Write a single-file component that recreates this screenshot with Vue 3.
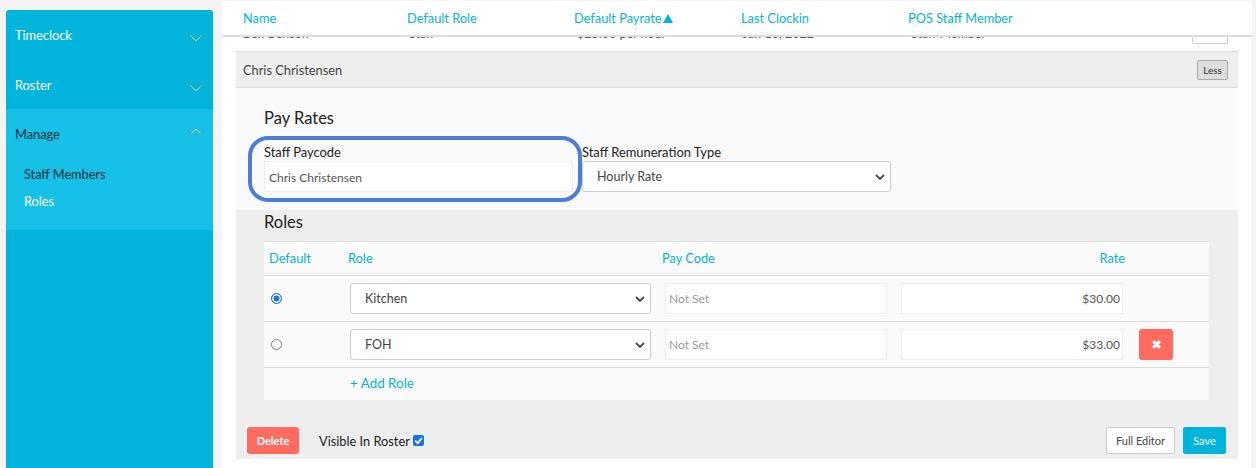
<template>
  <div class="page">
    <aside class="sidebar">
      <div class="nav-item timeclock">
        <span>Timeclock</span>
        <svg class="chev" viewBox="0 0 14 8"><path d="M1 1l6 6 6-6" /></svg>
      </div>
      <div class="nav-item roster">
        <span>Roster</span>
        <svg class="chev" viewBox="0 0 14 8"><path d="M1 1l6 6 6-6" /></svg>
      </div>
      <div class="nav-open">
        <div class="nav-item manage">
          <span>Manage</span>
          <svg class="chev" viewBox="0 0 14 8"><path d="M1 7l6-6 6 6" /></svg>
        </div>
        <div class="sub-link dark">Staff Members</div>
        <div class="sub-link">Roles</div>
      </div>
    </aside>

    <main class="main">
      <div class="table-head">
        <span v-for="col in columns" :key="col.label" :style="{ width: col.width + 'px' }">
          {{ col.label }}<i v-if="col.sorted" class="sort-arrow"></i>
        </span>
      </div>
      <div class="clipped-row">
        <div class="clipped-inner">
          <span class="c-name">Ben Benson</span>
          <span class="c-role">Staff</span>
          <span class="c-pay">$25.00 per hour</span>
          <span class="c-date">Jan 10, 2022</span>
          <span class="c-pos">Staff Member</span>
          <button class="more">More</button>
        </div>
      </div>
      <div class="open-row">
        <span>Chris Christensen</span>
        <button class="less">Less</button>
      </div>

      <section class="pay-rates">
        <h3>Pay Rates</h3>
        <div class="fields">
          <div class="field paycode">
            <label>Staff Paycode</label>
            <div class="input">Chris Christensen</div>
            <div class="ring"></div>
          </div>
          <div class="field remun">
            <label>Staff Remuneration Type</label>
            <div class="select">
              <span>Hourly Rate</span>
              <svg class="caret" viewBox="0 0 10 6"><path d="M1 1l4 4 4-4" /></svg>
            </div>
          </div>
        </div>
      </section>

      <section class="roles">
        <h3>Roles</h3>
        <div class="roles-table">
          <div class="r-head">
            <span class="h-default">Default</span>
            <span class="h-role">Role</span>
            <span class="h-code">Pay Code</span>
            <span class="h-rate">Rate</span>
          </div>
          <div v-for="r in roles" :key="r.name" class="r-row">
            <div class="radio-cell">
              <span :class="['radio', { on: r.isDefault }]"></span>
            </div>
            <div class="select role-select">
              <span>{{ r.name }}</span>
              <svg class="caret" viewBox="0 0 10 6"><path d="M1 1l4 4 4-4" /></svg>
            </div>
            <div class="input code">Not Set</div>
            <div class="input rate">{{ r.rate }}</div>
            <button v-if="!r.isDefault" class="remove">
              <svg viewBox="0 0 10 10"><path d="M2 2l6 6M8 2l-6 6" /></svg>
            </button>
          </div>
          <div class="add-role">+ Add Role</div>
        </div>

        <div class="actions">
          <button class="delete">Delete</button>
          <span class="visible">Visible In Roster</span>
          <span class="check">
            <svg viewBox="0 0 10 10"><path d="M2 5.2l2.2 2.2L8 2.8" /></svg>
          </span>
          <button class="full-editor">Full Editor</button>
          <button class="save">Save</button>
        </div>
      </section>
    </main>
  </div>
</template>

<script setup>
const columns = [
  { label: 'Name', width: 164 },
  { label: 'Default Role', width: 167 },
  { label: 'Default Payrate', width: 167, sorted: true },
  { label: 'Last Clockin', width: 167 },
  { label: 'POS Staff Member', width: 200 },
];

const roles = [
  { name: 'Kitchen', rate: '$30.00', isDefault: true },
  { name: 'FOH', rate: '$33.00', isDefault: false },
];
</script>

<style>
html, body {
  margin: 0;
  background: #f4f4f4;
}
</style>

<style scoped>
.page {
  display: flex;
  width: 1256px;
  height: 468px;
  overflow: hidden;
  font-family: Lato, "Noto Sans", sans-serif;
  font-size: 13px;
  color: #333;
  background: #f4f4f4;
}
.sidebar {
  width: 207px;
  margin: 10px 9px 0 6px;
  background: #00b4dc;
  border-radius: 3px 3px 0 0;
  color: #fff;
  flex: none;
}
.nav-item {
  display: flex;
  justify-content: space-between;
  padding: 0 10px 0 9px;
  font-size: 12.8px;
}
.timeclock {
  height: 50px;
  padding-top: 17px;
  box-sizing: border-box;
}
.roster {
  height: 49px;
  padding-top: 17px;
  box-sizing: border-box;
}
.manage {
  height: 56px;
  padding-top: 17px;
  box-sizing: border-box;
  color: #06303c;
}
.chev {
  width: 14px;
  height: 8px;
  margin-top: 7px;
  fill: none;
  stroke: #fff;
  stroke-width: 1;
}
.manage .chev {
  margin-top: 2px;
}
.nav-open {
  background: #17c0e6;
  height: 121px;
}
.sub-link {
  padding-left: 18px;
  margin-bottom: 9px;
  line-height: 18px;
  font-size: 12.7px;
}
.sub-link.dark {
  color: #06303c;
}
.main {
  width: 1029px;
  margin-top: 1px;
  padding: 0 13px 0 14px;
  box-sizing: border-box;
  background: #fff;
  flex: none;
  height: 467px;
}
.table-head {
  display: flex;
  height: 34px;
  align-items: center;
  color: #00b4dc;
  font-size: 12.8px;
  margin: 0 -14px;
  padding-left: 21px;
  border-bottom: 2px solid #ddd;
  position: relative;
  z-index: 1;
  background: #fff;
}
.sort-arrow {
  display: inline-block;
  width: 0;
  height: 0;
  border: 5.5px solid transparent;
  border-top: 0;
  border-bottom: 9px solid #00b4dc;
  margin-left: 1px;
}
.clipped-row {
  height: 14px;
  border-bottom: 1px solid #ddd;
  overflow: hidden;
}
.clipped-inner {
  display: flex;
  position: relative;
  margin-top: -11px;
  line-height: 16px;
  color: #555;
  font-size: 12.5px;
  padding-left: 7px;
}
.c-name { width: 166px; }
.c-role { width: 168px; }
.c-pay { width: 166px; }
.c-date { width: 168px; }
.c-pos { width: 281px; }
.more {
  width: 36px;
  height: 25px;
  margin-top: -7px;
  background: #fff;
  border: 1px solid #ccc;
  border-radius: 2px;
  font: inherit;
  font-size: 10px;
  color: #999;
  padding: 0;
}
.open-row {
  display: flex;
  justify-content: space-between;
  align-items: center;
  height: 35px;
  padding: 0 10px 0 7px;
  background: #eee;
  border-bottom: 1px solid #ddd;
  font-size: 12.8px;
  color: #444;
}
.less {
  width: 31px;
  height: 20px;
  padding: 0;
  background: #ddd;
  border: 1px solid #aaa;
  border-radius: 2px;
  font: inherit;
  font-size: 10px;
  color: #333;
}
.pay-rates {
  height: 122px;
  box-sizing: border-box;
  padding: 20px 0 0 28px;
  background: #fafafa;
}
h3 {
  margin: 0;
  font-size: 16.5px;
  font-weight: 400;
  line-height: 20px;
  color: #222;
}
.fields {
  display: flex;
  margin-top: 16px;
}
.field {
  position: relative;
}
.field label {
  display: block;
  font-size: 12.9px;
  line-height: 16px;
  color: #222;
  margin-bottom: 1px;
}
.paycode {
  width: 318px;
}
.ring {
  position: absolute;
  left: -16px;
  top: -8px;
  width: 334px;
  height: 66px;
  box-sizing: border-box;
  border: 4px solid #4d7ed6;
  border-radius: 20px;
  pointer-events: none;
}
.input {
  box-sizing: border-box;
  height: 31px;
  line-height: 29px;
  background: #fff;
  border: 1px solid #eee;
  padding: 0 4px;
  font-size: 12px;
  color: #555;
}
.paycode .input {
  width: 309px;
  line-height: 31px;
}
.select {
  display: flex;
  justify-content: space-between;
  align-items: center;
  box-sizing: border-box;
  height: 31px;
  background: #fff;
  border: 1px solid #ccc;
  border-radius: 3px;
  padding: 0 5px 0 14px;
  font-size: 12.5px;
  color: #444;
}
.remun .select {
  width: 309px;
}
.caret {
  width: 10px;
  height: 6px;
  fill: none;
  stroke: #444;
  stroke-width: 1.8;
}
.roles {
  height: 249px;
  box-sizing: border-box;
  padding: 2px 0 0 28px;
  background: #eee;
  position: relative;
}
.roles-table {
  width: 945px;
  margin-top: 9px;
  background: #fafafa;
  border-top: 1px solid #ddd;
}
.r-head {
  position: relative;
  height: 33px;
  line-height: 33px;
  border-bottom: 1px solid #ddd;
  color: #00b4dc;
  font-size: 12.8px;
  display: flex;
}
.h-default { width: 84px; padding-left: 5px; box-sizing: border-box; }
.h-role { width: 314px; }
.h-code { width: 150px; }
.h-rate { width: 313px; text-align: right; }
.r-row {
  display: flex;
  align-items: center;
  height: 45px;
  border-bottom: 1px solid #ddd;
}
.radio-cell {
  width: 86px;
  padding-left: 7px;
  box-sizing: border-box;
}
.radio {
  display: block;
  box-sizing: border-box;
  width: 11px;
  height: 11px;
  border-radius: 50%;
  border: 1px solid #777;
  background: #fff;
}
.radio.on {
  border: 1.5px solid #1773e8;
  box-shadow: inset 0 0 0 1.5px #fff;
  background: #1773e8;
}
.role-select {
  width: 301px;
}
.code {
  width: 222px;
  margin-left: 14px;
  color: #999;
  padding-left: 3px;
}
.rate {
  width: 222px;
  margin-left: 14px;
  text-align: right;
  padding-right: 2px;
}
.remove {
  width: 34px;
  height: 31px;
  margin-left: 16px;
  padding: 0;
  background: #ff6a61;
  border: 0;
  border-radius: 3px;
}
.remove svg {
  display: block;
  width: 11px;
  height: 11px;
  margin: auto;
  fill: none;
  stroke: #fff;
  stroke-width: 2.8;
}
.add-role {
  height: 32px;
  line-height: 30px;
  padding-left: 86px;
  color: #00b4dc;
  font-size: 13.4px;
}
.actions {
  display: flex;
  align-items: center;
  margin: 27px 12px 0 -17px;
}
button {
  font-family: inherit;
}
.delete {
  width: 52px;
  height: 27px;
  padding: 0;
  background: #ff6a61;
  border: 0;
  border-radius: 3px;
  color: #fff;
  font-size: 11px;
  font-weight: 700;
}
.visible {
  margin-left: 20px;
  color: #222;
  font-size: 12.8px;
  padding-top: 1px;
}
.check {
  display: block;
  width: 11px;
  height: 11px;
  margin-left: 3px;
  background: #1773e8;
  border-radius: 2px;
}
.check svg {
  display: block;
  fill: none;
  stroke: #fff;
  stroke-width: 1.6;
}
.full-editor {
  width: 69px;
  height: 27px;
  margin-left: auto;
  padding: 0;
  background: #fff;
  border: 1px solid #ccc;
  border-radius: 2px;
  color: #444;
  font-size: 11px;
}
.save {
  width: 43px;
  height: 27px;
  margin-left: 8px;
  padding: 0;
  background: #00b4dc;
  border: 0;
  border-radius: 2px;
  color: #fff;
  font-size: 11px;
}
</style>
